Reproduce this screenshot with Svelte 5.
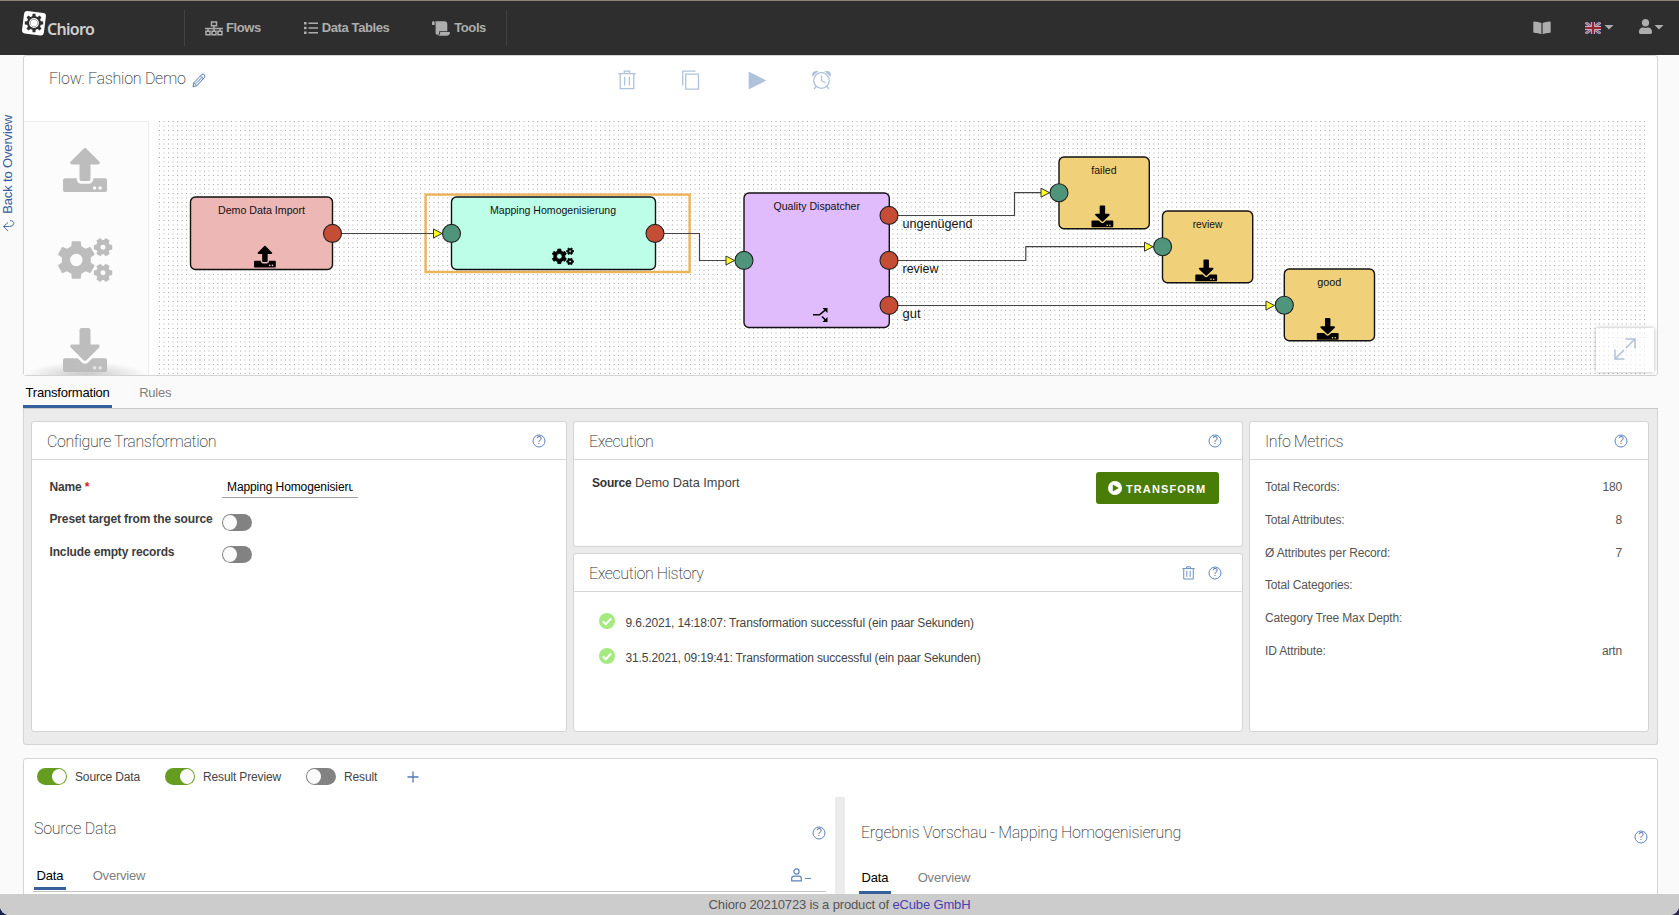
<script>
  // outline of a cog wheel, used by the logo, the palette and the nodes
  function gear(cx, cy, r, teeth, turn = 0) {
    const inner = r * 0.76;
    const step = (Math.PI * 2) / teeth;
    const points = [];
    for (let i = 0; i < teeth; i++) {
      const a = i * step + turn;
      for (const [rad, off] of [[inner, -0.3], [r, -0.2], [r, 0.2], [inner, 0.3]]) {
        const x = cx + rad * Math.sin(a + off * step);
        const y = cy - rad * Math.cos(a + off * step);
        points.push(`${x.toFixed(2)} ${y.toFixed(2)}`);
      }
    }
    const h = r * 0.38;
    return `M${points.join("L")}ZM${cx - h} ${cy}a${h} ${h} 0 1 0 ${2 * h} 0a${h} ${h} 0 1 0 ${-2 * h} 0Z`;
  }

  const cogs =
    gear(213, 256, 214, 6) +
    gear(524, 107, 100, 6, Math.PI / 6) +
    gear(524, 405, 100, 6, Math.PI / 6);

  const upload =
    "M296 384h-80c-13.3 0-24-10.7-24-24V192h-87.7c-17.8 0-26.7-21.5-14.1-34.1L242.3 5.7c7.5-7.5 19.8-7.5 27.3 0l152.2 152.2c12.6 12.6 3.7 34.1-14.1 34.1H320v168c0 13.3-10.7 24-24 24zm216-8v112c0 13.3-10.7 24-24 24H24c-13.3 0-24-10.7-24-24V376c0-13.3 10.7-24 24-24h136v8c0 30.9 25.1 56 56 56h80c30.9 0 56-25.1 56-56v-8h136c13.3 0 24 10.7 24 24zm-124 88c0-11-9-20-20-20s-20 9-20 20 9 20 20 20 20-9 20-20zm64 0c0-11-9-20-20-20s-20 9-20 20 9 20 20 20 20-9 20-20z";
  const download =
    "M216 0h80c13.3 0 24 10.7 24 24v168h87.7c17.8 0 26.7 21.5 14.1 34.1L269.7 378.3c-7.5 7.5-19.8 7.5-27.3 0L90.1 226.1c-12.6-12.6-3.7-34.1 14.1-34.1H192V24c0-13.3 10.7-24 24-24zm296 376v112c0 13.3-10.7 24-24 24H24c-13.3 0-24-10.7-24-24V376c0-13.3 10.7-24 24-24h146.7l49 49c20.1 20.1 52.5 20.1 72.6 0l49-49H488c13.3 0 24 10.7 24 24zm-124 88c0-11-9-20-20-20s-20 9-20 20 9 20 20 20 20-9 20-20zm64 0c0-11-9-20-20-20s-20 9-20 20 9 20 20 20 20-9 20-20z";

  const nodes = [
    { label: "Demo Data Import", x: 31.5, y: 76, w: 142, h: 72.5, fill: "#edb7b5", tx: 59, ty: 92.7, tw: 87, icon: "upload", ix: 95, iy: 124.7 },
    { label: "Mapping Homogenisierung", x: 292.5, y: 76, w: 204, h: 72.5, fill: "#bdfee9", tx: 331, ty: 92.7, tw: 126, icon: "cogs", ix: 393, iy: 126.5 },
    { label: "Quality Dispatcher", x: 585, y: 72, w: 145.3, h: 134.5, fill: "#e0bcfc", tx: 614.5, ty: 88.7, tw: 86.5, icon: "split", ix: 654, iy: 186 },
    { label: "failed", x: 900, y: 36, w: 90.3, h: 71.8, fill: "#f1d07a", tx: 932.3, ty: 53.2, tw: 25.2, icon: "download", ix: 932.5, iy: 84.5 },
    { label: "review", x: 1003.5, y: 90, w: 90.2, h: 71.8, fill: "#f1d07a", tx: 1033.7, ty: 107.2, tw: 29.6, icon: "download", ix: 1036.3, iy: 138.5 },
    { label: "good", x: 1125.3, y: 148, w: 90.2, h: 71.8, fill: "#f1d07a", tx: 1158.3, ty: 165.2, tw: 24, icon: "download", ix: 1157.8, iy: 197 }
  ];

  const edges = [
    { line: "M174 112.5H283", ax: 283, ay: 112.5 },
    { line: "M497 112.5H540.5V139.5H575.5", ax: 575.5, ay: 139.5 },
    { line: "M730 94.5H855.5V71.7H890.5", ax: 890.5, ay: 71.7 },
    { line: "M730 139.5H866.8V125.7H994", ax: 994, ay: 125.7 },
    { line: "M730 184.5H1115.5", ax: 1115.5, ay: 184.5 }
  ];

  const ports = [
    { x: 173.5, y: 112.4, out: true },
    { x: 292.5, y: 112.4 },
    { x: 496, y: 112.4, out: true },
    { x: 585, y: 139.4 },
    { x: 730, y: 94.4, out: true },
    { x: 730, y: 139.4, out: true },
    { x: 730, y: 184.4, out: true },
    { x: 900, y: 71.7 },
    { x: 1003.6, y: 125.7 },
    { x: 1125.3, y: 184.3 }
  ];

  const portLabels = [
    { text: "ungenügend", y: 107, w: 70 },
    { text: "review", y: 152, w: 36 },
    { text: "gut", y: 196.8, w: 18 }
  ];

  const history = [
    "9.6.2021, 14:18:07: Transformation successful (ein paar Sekunden)",
    "31.5.2021, 09:19:41: Transformation successful (ein paar Sekunden)"
  ];

  const metrics = [
    ["Total Records:", "180"],
    ["Total Attributes:", "8"],
    ["Ø Attributes per Record:", "7"],
    ["Total Categories:", ""],
    ["Category Tree Max Depth:", ""],
    ["ID Attribute:", "artn"]
  ];

  let name = "Mapping Homogenisierung";
  let options = [
    { label: "Preset target from the source", on: false },
    { label: "Include empty records", on: false }
  ];
  let views = [
    { label: "Source Data", on: true },
    { label: "Result Preview", on: true },
    { label: "Result", on: false }
  ];
</script>

{#snippet help()}
  <svg class="help" width="14" height="14" viewBox="0 0 14 14">
    <circle cx="7" cy="7" r="6" fill="none" stroke="#5c84bd" />
    <text x="7" y="10.4" text-anchor="middle">?</text>
  </svg>
{/snippet}

{#snippet trash(w, h)}
  <svg width={w} height={h} viewBox="0 0 18 20" fill="none" stroke="currentColor" stroke-width="1.3">
    <path d="M.3 3.7h17.4M6.3 3.5V1.2h5.4v2.3M2.2 4v14.6h13.6V4M6.6 6.8v8.7M11.4 6.8v8.7" />
  </svg>
{/snippet}

<div class="page">
  <header>
    <div class="logo">
      <svg width="26" height="27" viewBox="0 0 26 27">
        <rect x="2" y="2" width="22" height="22.5" rx="3" fill="#fff" transform="rotate(7 13 13)" />
        <path d={gear(13, 13, 9.3, 8)} fill="#2e2e2e" fill-rule="evenodd" />
        <circle cx="13" cy="13" r="4.3" fill="none" stroke="#fff" stroke-width="1.2" />
      </svg>
      <span>Chioro</span>
    </div>
    <nav>
      <a class="flows" href="#flows">
        <svg width="18" height="15" viewBox="0 0 18 15" fill="none" stroke="currentColor" stroke-width="1.5">
          <path d="M6.5 1h5v3.8h-5zM1 10.2h4v3.6H1zM7 10.2h4v3.6H7zM13 10.2h4v3.6h-4zM9 5v5M0 7.5h18M3 7.5V10M15 7.5V10" />
        </svg>
        <span>Flows</span>
      </a>
      <a href="#tables">
        <svg width="14" height="14" viewBox="0 0 14 14" fill="currentColor">
          <path d="M0 1h2.6v2.6H0zM0 5.7h2.6v2.6H0zM0 10.4h2.6V13H0zM4.5 1.5H14v1.6H4.5zM4.5 6.2H14v1.6H4.5zM4.5 10.9H14v1.6H4.5z" />
        </svg>
        <span>Data Tables</span>
      </a>
      <a href="#tools">
        <svg width="18" height="15" viewBox="0 0 640 512" fill="currentColor">
          <path d="M48 0C21.5 0 0 21.5 0 48v64c0 8.8 7.2 16 16 16h80V48C96 21.5 74.5 0 48 0zm208 412.6V352h288V96c0-52.9-43.1-96-96-96H111.6C121.800 13.400 128 29.900 128 48v368c0 38.900 34.700 69.700 74.800 63.100C234.200 474 256 444.500 256 412.600zM288 384v32c0 52.900-43.100 96-96 96h336c61.900 0 112-50.100 112-112 0-8.800-7.200-16-16-16H288z" />
        </svg>
        <span>Tools</span>
      </a>
    </nav>
    <div class="account">
      <svg class="book" width="18" height="14" viewBox="0 0 18 14" fill="currentColor">
        <path d="M.3 1.2Q.3.5 1 .5 5.5.6 8.4 2v11.3Q5.5 11.9.9 11.7.3 11.7.3 11zM17.7 1.2Q17.7.5 17 .5 12.5.6 9.6 2v11.3q2.9-1.4 7.500-1.600.6 0 .6-.7z" />
      </svg>
      <svg class="flag" width="16" height="12" viewBox="0 0 16 12">
        <path fill="#35386a" d="M0 0h16v12H0z" />
        <path stroke="#b9b6be" stroke-width="2.6" d="M0 0l16 12M16 0L0 12" />
        <path stroke="#9f3e4c" stroke-width=".9" d="M0 0l16 12M16 0L0 12" />
        <path stroke="#b9b6be" stroke-width="4" d="M8 0v12M0 6h16" />
        <path stroke="#9b2335" stroke-width="2.2" d="M8 0v12M0 6h16" />
      </svg>
      <i class="caret"></i>
      <svg class="user" width="13" height="15" viewBox="0 0 448 512" fill="currentColor">
        <path d="M224 256c70.7 0 128-57.3 128-128S294.7 0 224 0 96 57.3 96 128s57.3 128 128 128zm89.6 32h-16.7c-22.2 10.2-46.9 16-72.9 16s-50.6-5.8-72.9-16h-16.7C60.2 288 0 348.2 0 422.4V464c0 26.5 21.5 48 48 48h352c26.5 0 48-21.5 48-48v-41.6c0-74.2-60.2-134.4-134.4-134.4z" />
      </svg>
      <i class="caret"></i>
    </div>
  </header>

  <main>
    <a class="back" href="#overview">
      <span>Back to Overview</span>
      <svg width="13" height="12" viewBox="0 0 13 12" fill="none" stroke="currentColor" stroke-width=".9">
        <path d="M8 .6Q12 .8 11.700 3.600T7.500 6.500H1.500M6 2.500l-4.500 4 4.500 4.500" />
      </svg>
    </a>

    <div class="content">
      <section class="flow">
        <div class="flow-head">
          <h1>
            <span>Flow: Fashion Demo</span>
            <svg width="14" height="15" viewBox="0 0 14 15" fill="none" stroke="#4f7ab5" stroke-width="1">
              <path d="M1 13.8l1-4.2 7.8-8q1.3-1 2.5.2t.3 2.5L4.9 12.7zM8.5 3l3 2.9M2 9.7l2.9 3M10 4.4l-6 6.2" />
            </svg>
          </h1>
          <div class="tools">
            {@render trash(18, 20)}
            <svg width="19" height="20" viewBox="0 0 19 20" fill="none" stroke="currentColor" stroke-width="1.3">
              <path d="M1.700 15.500V1.200h12.800M4.700 4.200h12.800v15H4.700z" />
            </svg>
            <svg width="22" height="20" viewBox="0 0 22 20" fill="currentColor">
              <path d="M3.600 2.600q0-1 .9-.6l16 8q.7.5 0 1l-16 8q-.9.3-.9-.6z" />
            </svg>
            <svg width="20" height="20" viewBox="0 0 20 20" fill="none" stroke="currentColor" stroke-width="1.3">
              <circle cx="9.500" cy="10.500" r="7.800" />
              <path d="M9.500 5.500v5.200l4 2.300M4 16.500L2.200 19M15 16.500l1.800 2.500" />
              <path fill="currentColor" d="M.8 5.500Q.4 1.500 5 1.700zM18.300 5.500q.4-4-4.300-3.800z" />
            </svg>
          </div>
        </div>

        <div class="flow-body">
          <div class="palette">
            <svg width="44" height="44" viewBox="0 0 512 512"><path d={upload} /></svg>
            <svg width="55" height="44" viewBox="0 0 640 512"><path fill-rule="evenodd" d={cogs} stroke="#bdbdbd" stroke-width="18" stroke-linejoin="round" /></svg>
            <svg width="44" height="44" viewBox="0 0 512 512"><path d={download} /></svg>
          </div>

          <svg class="canvas" width="1487" height="254" viewBox="0 0 1487 254">
            <defs>
              <pattern id="dots" width="9" height="9" patternUnits="userSpaceOnUse">
                <path fill="#a6a6a6" d="M0 0h1v1H0z" />
                <path fill="#d6d6d6" d="M4 0h2v1H4zM0 4h1v2H0z" />
                <path fill="#ebebeb" d="M4 4h2v2H4z" />
              </pattern>
            </defs>
            <rect width="1487" height="254" fill="url(#dots)" />
            <rect x="266.600" y="73.600" width="264" height="77.400" fill="none" stroke="#edb358" stroke-width="2.400" />
            {#each nodes as node}
              <rect x={node.x} y={node.y} width={node.w} height={node.h} rx="5" fill={node.fill} stroke="#111" stroke-width="1.4" />
              <text class="node-label" x={node.tx} y={node.ty} textLength={node.tw} lengthAdjust="spacingAndGlyphs">{node.label}</text>
              {#if node.icon === "upload"}
                <path d={upload} transform="translate({node.ix} {node.iy}) scale(.0426)" />
              {:else if node.icon === "download"}
                <path d={download} transform="translate({node.ix} {node.iy}) scale(.0426)" />
              {:else if node.icon === "cogs"}
                <path fill-rule="evenodd" d={cogs} transform="translate({node.ix} {node.iy}) scale(.0345)" stroke="#000" stroke-width="24" />
              {:else}
                <g transform="translate({node.ix} {node.iy})">
                  <path d="M0 7.800h6.500l6-5M9 9.500l3.500 3.500" fill="none" stroke="#000" stroke-width="1.500" />
                  <path d="M9.500 1H14.500V6zM9.500 15H14.500V10z" />
                </g>
              {/if}
            {/each}
            {#each edges as edge}
              <path d={edge.line} fill="none" stroke="#444" stroke-width="1.2" />
              <path d="M{edge.ax} {edge.ay}l-8.5-4.5v9z" fill="#ffff1e" stroke="#333" />
            {/each}
            {#each ports as port}
              <circle cx={port.x} cy={port.y} r="9" fill={port.out ? "#c54d35" : "#4f957b"} stroke="#222" stroke-width="1.1" />
            {/each}
            {#each portLabels as label}
              <text class="port-label" x="743.5" y={label.y} textLength={label.w} lengthAdjust="spacingAndGlyphs">{label.text}</text>
            {/each}
          </svg>

          <button class="expand" aria-label="Expand">
            <svg width="22" height="22" viewBox="0 0 22 22" fill="none" stroke="#b0c2da" stroke-width="1.5">
              <path d="M11.5 1H21v9.5M21 1l-9 9M1 11.5V21h9.5M1 21l9-9" />
            </svg>
          </button>
        </div>
      </section>

      <div class="tabs main-tabs">
        <span class="tab active">Transformation</span>
        <span class="tab">Rules</span>
      </div>

      <section class="board">
        <div class="card configure">
          <div class="card-head">
            <h2>Configure Transformation</h2>
            {@render help()}
          </div>
          <div class="form">
            <label for="name">Name <em>*</em></label>
            <input id="name" bind:value={name} />
            {#each options as option}
              <span class="form-label">{option.label}</span>
              <button class="toggle" class:on={option.on} aria-label={option.label} on:click={() => (option.on = !option.on)}></button>
            {/each}
          </div>
        </div>

        <div class="middle">
          <div class="card execution">
            <div class="card-head">
              <h2>Execution</h2>
              {@render help()}
            </div>
            <div class="execute">
              <p><strong>Source</strong> Demo Data Import</p>
              <button class="transform">
                <svg width="14" height="14" viewBox="0 0 14 14">
                  <circle cx="7" cy="7" r="7" fill="#fff" />
                  <path d="M4.8 3.5v7L10.8 7z" fill="#4a7c08" />
                </svg>
                <span>TRANSFORM</span>
              </button>
            </div>
          </div>
          <div class="card">
            <div class="card-head">
              <h2>Execution History</h2>
              <span class="head-trash">{@render trash(13, 14)}</span>
              {@render help()}
            </div>
            <ul class="history">
              {#each history as entry}
                <li>
                  <svg width="16" height="16" viewBox="0 0 16 16">
                    <circle cx="8" cy="8" r="8" fill="#a5ea80" />
                    <path d="M3.8 8.3l2.9 2.9 5.5-5.7" fill="none" stroke="#fff" stroke-width="2" />
                  </svg>
                  <span>{entry}</span>
                </li>
              {/each}
            </ul>
          </div>
        </div>

        <div class="card">
          <div class="card-head">
            <h2>Info Metrics</h2>
            {@render help()}
          </div>
          <dl>
            {#each metrics as [label, value]}
              <div>
                <dt>{label}</dt>
                <dd>{value}</dd>
              </div>
            {/each}
          </dl>
        </div>
      </section>

      <section class="data">
        <div class="views">
          {#each views as view}
            <button class="toggle" class:on={view.on} aria-label={view.label} on:click={() => (view.on = !view.on)}></button>
            <span>{view.label}</span>
          {/each}
          <svg width="12" height="12" viewBox="0 0 12 12" stroke="#4f7ab5" stroke-width="1.3"><path d="M6 .5v11M.5 6h11" /></svg>
        </div>
        <div class="panes">
          <div class="pane source">
            <div class="pane-head">
              <h2>Source Data</h2>
              {@render help()}
            </div>
            <div class="tabs">
              <span class="tab active">Data</span>
              <span class="tab">Overview</span>
              <svg class="person" width="20" height="14" viewBox="0 0 20 14" fill="none" stroke="#5c84bd" stroke-width="1.2">
                <circle cx="5.5" cy="3.5" r="2.6" />
                <path d="M.7 12.9V10.5q0-2.3 2.3-2.3h5q2.3 0 2.3 2.3v2.4zM14 10.5h6" />
              </svg>
            </div>
          </div>
          <div class="divider"></div>
          <div class="pane result">
            <div class="pane-head">
              <h2>Ergebnis Vorschau - Mapping Homogenisierung</h2>
              {@render help()}
            </div>
            <div class="tabs">
              <span class="tab active">Data</span>
              <span class="tab">Overview</span>
            </div>
          </div>
        </div>
      </section>
    </div>
  </main>

  <footer>Chioro 20210723 is a product of&nbsp;<a href="#ecube">eCube GmbH</a></footer>
</div>

<style>
  :global(body) {
    margin: 0;
    background: linear-gradient(90deg, #16204a, #2c2350);
  }

  .page {
    display: flex;
    flex-direction: column;
    width: 1679px;
    height: 915px;
    overflow: hidden;
    border-radius: 0 0 9px 9px;
    background: #fafafa;
    color: #444;
    font: 12px/16px "Liberation Sans", Arial, sans-serif;
    letter-spacing: -0.15px;
  }

  .page * {
    box-sizing: border-box;
  }

  svg {
    display: block;
    flex: none;
    letter-spacing: 0;
  }

  a {
    text-decoration: none;
  }

  button {
    border: 0;
    padding: 0;
    font: inherit;
  }

  h1,
  h2 {
    margin: 0;
    font: 200 16px/20px Roboto, "Liberation Sans", sans-serif;
    letter-spacing: -0.25px;
    color: #333;
  }

  header {
    display: flex;
    align-items: center;
    flex: none;
    height: 55px;
    border-top: 1px solid #8d8480;
    background: #2e2e2e;
    color: #adadad;
  }

  .logo {
    display: flex;
    width: 184px;
    height: 36px;
    padding-left: 21px;
  }

  .logo span {
    margin: 9px 0 0;
    font: 600 16px/20px "Noto Sans", "Open Sans", sans-serif;
    letter-spacing: -0.7px;
    color: #d0d0d0;
  }

  nav {
    display: flex;
    align-items: center;
    justify-content: space-between;
    width: 323px;
    height: 36px;
    padding: 0 20px;
    border: solid #424242;
    border-width: 0 1px;
  }

  nav a {
    display: flex;
    align-items: center;
    gap: 4px;
    color: #adadad;
    font-size: 13px;
    font-weight: bold;
    letter-spacing: -0.38px;
  }

  nav .flows {
    gap: 3px;
  }

  .account {
    display: flex;
    align-items: center;
    margin-left: auto;
    padding-right: 15px;
  }

  .book {
    margin-right: 34px;
  }

  .flag {
    margin-right: 3px;
  }

  .caret {
    width: 10px;
    height: 5px;
    margin-bottom: 2px;
    background: #adadad;
    clip-path: polygon(0 0, 100% 0, 50% 100%);
  }

  .user {
    margin: 0 2px 3px 25px;
  }

  main {
    display: flex;
    flex: 1;
    min-height: 0;
  }

  .back {
    display: flex;
    flex-direction: column;
    gap: 6px;
    width: 23px;
    padding: 60px 0 0 2px;
    color: #36609c;
    font-size: 13px;
  }

  .back span {
    line-height: 12px;
    writing-mode: vertical-rl;
    transform: rotate(180deg);
  }

  .content {
    width: 1635px;
  }

  .flow {
    height: 321px;
    border: 1px solid #d4d4d4;
    border-radius: 3px;
    background: #fff;
  }

  .flow-head {
    display: flex;
    height: 65px;
    padding: 14px 0 0 25px;
  }

  h1 {
    display: flex;
    gap: 6px;
    width: 569px;
  }

  h1 span {
    margin-top: -1px;
  }

  h1 svg {
    margin-top: 3px;
  }

  .tools {
    display: flex;
    gap: 45px;
    color: #b0c2da;
  }

  .flow-body {
    position: relative;
    display: flex;
    height: 254px;
  }

  .palette {
    display: flex;
    flex-direction: column;
    align-items: center;
    gap: 46px;
    width: 125px;
    margin-right: 10px;
    padding: 26px 2px 0 0;
    overflow: hidden;
    border: solid #ececec;
    border-width: 1px 1px 0 0;
    background: radial-gradient(ellipse 62px 13px at 50% 100%, #c8c8c8, #fdfcfd) #fdfcfd;
    fill: #bdbdbd;
  }

  .node-label {
    font-size: 11px;
    fill: #111;
  }

  .port-label {
    font-size: 12.5px;
    fill: #111;
  }

  .expand {
    position: absolute;
    right: 3px;
    bottom: 3px;
    display: grid;
    place-items: center;
    width: 58px;
    height: 44px;
    padding-bottom: 2px;
    background: rgba(255, 255, 255, 0.6);
    box-shadow: 0 0 4px rgba(0, 0, 0, 0.3);
  }

  .tabs {
    display: flex;
    gap: 24.5px;
    font-size: 13px;
    letter-spacing: -0.2px;
  }

  .tab {
    padding: 0 2.5px;
    border-bottom: 3px solid transparent;
    color: #808080;
  }

  .tab.active {
    border-color: #36609c;
    color: #000;
  }

  .main-tabs {
    height: 33px;
    padding-top: 9px;
    border-bottom: 1px solid #c8c8c8;
    line-height: 16px;
  }

  .board {
    display: grid;
    grid-template-columns: 536px 670px 400px;
    gap: 6px;
    height: 336px;
    padding: 12px 7px;
    border: 1px solid #d4d4d4;
    border-top: 0;
    border-radius: 0 0 3px 3px;
    background: #ebebeb;
  }

  .card {
    border: 1px solid #d4d4d4;
    border-radius: 3px;
    background: #fff;
  }

  .card-head {
    display: flex;
    align-items: center;
    height: 38px;
    padding: 0 20px 0 15px;
    border-bottom: 1px solid #d4d4d4;
  }

  .card-head h2 {
    margin-right: auto;
    padding-top: 2px;
    letter-spacing: -0.4px;
  }

  .help text {
    font: 10px "Liberation Sans", Arial, sans-serif;
    fill: #4f7ab5;
  }

  .form {
    display: grid;
    grid-template-columns: 172.5px 136px;
    align-items: start;
    padding: 18px 0 0 17.5px;
  }

  .form label,
  .form-label {
    height: 33px;
    line-height: 17px;
    font-weight: bold;
    color: #3c3c3c;
  }

  .form label {
    padding-top: 1px;
  }

  .form em {
    color: #e02020;
    font-style: normal;
  }

  .form input {
    width: 136px;
    height: 20px;
    padding: 0 5px 2px;
    border: 0;
    border-bottom: 1px solid #a0a0a0;
    outline: 0;
    font: 12px "Liberation Sans", Arial, sans-serif;
    letter-spacing: -0.1px;
  }

  .form .toggle {
    margin-top: 3px;
  }

  .form .toggle:last-child {
    margin-top: 2px;
  }

  .toggle {
    display: flex;
    width: 30px;
    height: 17px;
    padding: 1px;
    border-radius: 9px;
    background: #828282;
  }

  .toggle::before {
    content: "";
    width: 14px;
    height: 15px;
    border-radius: 50%;
    background: #fafafa;
  }

  .toggle.on {
    justify-content: flex-end;
    background: #669c20;
  }

  .middle {
    display: grid;
    grid-template-rows: 126px 1fr;
    gap: 6px;
  }

  .execute {
    display: flex;
    justify-content: space-between;
    padding: 12px 23px 0 18px;
  }

  .execute p {
    margin: 3px 0 0;
    font-size: 12.8px;
    letter-spacing: 0;
  }

  .execute strong {
    font-size: 12px;
    letter-spacing: -0.2px;
    color: #333;
  }

  .transform {
    display: flex;
    align-items: center;
    gap: 4px;
    width: 123px;
    height: 32px;
    padding-left: 12px;
    border-radius: 3px;
    background: #4a7c08;
    color: #fff;
    font-size: 11px;
    font-weight: bold;
    letter-spacing: 1.1px;
  }

  .transform span {
    padding-top: 2px;
  }

  .head-trash {
    margin-right: 13px;
    color: #5c84bd;
  }

  .history {
    margin: 0;
    padding: 21px 0 0 24.5px;
    list-style: none;
  }

  .history li {
    display: flex;
    gap: 11px;
    height: 35px;
  }

  .history span {
    padding-top: 2px;
  }

  dl {
    margin: 0;
    padding: 18px 26px 0 15px;
    color: #555;
  }

  dl div {
    display: flex;
    justify-content: space-between;
    height: 32.8px;
    line-height: 18px;
  }

  dd {
    margin: 0;
  }

  .data {
    height: 150px;
    margin-top: 13px;
    border: 1px solid #d4d4d4;
    border-radius: 3px;
    background: #fff;
  }

  .views {
    display: flex;
    align-items: center;
    height: 38px;
    padding: 0 0 3px 13px;
  }

  .views span {
    margin: 0 25px 0 8px;
  }

  .views svg {
    margin-left: 5px;
  }

  .panes {
    display: flex;
    height: 111px;
  }

  .source {
    width: 811px;
    padding: 20px 9px 0 9px;
  }

  .divider {
    width: 10px;
    background: #ebebeb;
  }

  .result {
    flex: 1;
    padding: 24px 9px 0 14px;
  }

  .pane-head {
    display: flex;
    justify-content: space-between;
    height: 50px;
  }

  .pane-head h2 {
    padding: 2px 0 0 1px;
  }

  .pane .help {
    margin-top: 9px;
  }

  .pane .tabs {
    height: 25px;
    padding: 1px 0 0 1px;
    border-bottom: 1px solid #c4c4c4;
  }

  .pane .tab {
    height: 22px;
    line-height: 16px;
  }

  .result .pane-head {
    height: 48px;
  }

  .result .pane-head h2 {
    padding-left: 2px;
  }

  .pane.result .tabs {
    height: 27px;
    padding-left: 0;
  }

  .pane.result .tab {
    height: 24px;
  }

  .person {
    margin-left: auto;
    margin-right: 15px;
  }

  footer {
    position: relative;
    flex: none;
    height: 21px;
    background: #ccc;
    color: #555;
    font-size: 13px;
    line-height: 21px;
    text-align: center;
  }

  footer a {
    color: #4b3cb0;
  }
</style>
